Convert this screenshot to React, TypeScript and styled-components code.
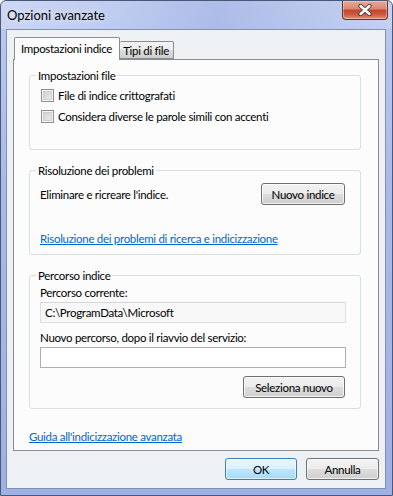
import React from 'react';
import { createGlobalStyle, styled } from 'styled-components';

const GlobalStyle = createGlobalStyle`
  html, body {
    margin: 0;
    padding: 0;
    background: #ffffff;
  }
  body {
    font-family: Lato, 'Noto Sans', sans-serif;
    font-size: 11.5px;
    letter-spacing: -0.3px;
    color: #000000;
  }
  * {
    box-sizing: border-box;
  }
`;

const Window = styled.div`
  width: 393px;
  height: 496px;
  display: flex;
  flex-direction: column;
  border: 1px solid #4a5878;
  border-radius: 6px 6px 0 0;
  background: linear-gradient(180deg, #bccaf0 0%, #a9b9e8 40%, #9fb0e4 100%);
  overflow: hidden;
`;

const TitleBar = styled.div`
  height: 28px;
  display: flex;
  align-items: flex-start;
  justify-content: space-between;
  padding-left: 6px;
  background: linear-gradient(
    90deg,
    rgba(255, 255, 255, 0.25) 0%,
    rgba(255, 255, 255, 0.05) 30%,
    rgba(120, 135, 200, 0.2) 55%,
    rgba(255, 255, 255, 0.15) 100%
  );
`;

const Title = styled.span`
  margin-top: 7px;
  font-size: 13px;
  letter-spacing: 0;
  line-height: 15px;
  color: #000000;
  text-shadow: 0 0 6px rgba(255, 255, 255, 0.9);
`;

const CloseButton = styled.div`
  width: 46px;
  height: 19px;
  margin-right: 4px;
  display: flex;
  align-items: center;
  justify-content: center;
  border: 1px solid #6f3227;
  border-top: none;
  border-radius: 0 0 4px 4px;
  background: linear-gradient(
    180deg,
    #e9a99a 0%,
    #d98672 45%,
    #c2442a 50%,
    #cd5a3f 75%,
    #e0907a 100%
  );
  box-shadow: inset 0 0 0 1px rgba(255, 220, 210, 0.45);
`;

const Client = styled.div`
  flex: 1;
  margin: 0 6px 6px 5px;
  display: flex;
  flex-direction: column;
  padding: 7px 6px 8px 6px;
  border: 1px solid #8090b6;
  background: #eef1f4;
`;

const TabStrip = styled.div`
  display: flex;
  align-items: flex-end;
  height: 23px;
  margin-bottom: -1px;
  position: relative;
  z-index: 1;
`;

const Tab = styled.div<{ $active?: boolean }>`
  height: ${(p) => (p.$active ? '23px' : '18px')};
  display: flex;
  align-items: ${(p) => (p.$active ? 'flex-start' : 'center')};
  padding: ${(p) => (p.$active ? '3px 7px 0 6px' : '0 4px 0 3px')};
  margin-left: ${(p) => (p.$active ? '1px' : '0')};
  margin-bottom: ${(p) => (p.$active ? '0' : '1px')};
  border: 1px solid #898c95;
  border-bottom: ${(p) => (p.$active ? 'none' : '1px solid #898c95')};
  border-left: ${(p) => (p.$active ? '1px solid #898c95' : 'none')};
  border-radius: 2px 2px 0 0;
  background: ${(p) =>
    p.$active
      ? '#fcfcfc'
      : 'linear-gradient(180deg, #f2f2f2 0%, #ebebeb 50%, #dddddd 51%, #cfcfcf 100%)'};
  line-height: 15px;
  white-space: nowrap;
`;

const Panel = styled.div`
  flex: 1;
  display: flex;
  flex-direction: column;
  padding: 8px 17px 0 15px;
  border: 1px solid #898c95;
  background: #fcfcfc;
`;

const Group = styled.fieldset<{ $gap?: number }>`
  margin: 0 0 ${(p) => p.$gap ?? 0}px 0;
  padding: 0;
  min-inline-size: 0;
  border: 1px solid #d5dfe5;
  border-radius: 3px;
`;

const Legend = styled.legend`
  margin-left: 6px;
  padding: 0 2px;
  line-height: 15px;
  color: #000000;
`;

const GroupBody = styled.div<{ $pad: string; $gap?: number }>`
  display: flex;
  flex-direction: column;
  gap: ${(p) => p.$gap ?? 0}px;
  padding: ${(p) => p.$pad};
`;

const CheckRow = styled.label`
  display: flex;
  align-items: center;
  gap: 4px;
  height: 17px;
  line-height: 15px;
`;

const CheckBox = styled.span`
  width: 13px;
  height: 13px;
  flex: none;
  border: 1px solid #8e8f8f;
  background: #f4f4f4;
  box-shadow: inset 0 0 0 1px #f4f4f4, inset 0 0 0 2px #cfcfcf;
  background-image: linear-gradient(135deg, #cbcbcb 0%, #f0f0f0 100%);
`;

const SplitRow = styled.div`
  display: flex;
  align-items: center;
  justify-content: space-between;
`;

const Text = styled.span<{ $top?: number }>`
  margin-top: ${(p) => p.$top ?? 0}px;
  line-height: 15px;
  white-space: nowrap;
`;

const Link = styled.a`
  line-height: 15px;
  color: #0066cc;
  text-decoration: underline;
  white-space: nowrap;
  cursor: pointer;
`;

const Button = styled.button<{ $width: number; $default?: boolean }>`
  width: ${(p) => p.$width}px;
  height: 22px;
  padding: 0;
  font: inherit;
  letter-spacing: inherit;
  line-height: 15px;
  color: #000000;
  border: 1px solid ${(p) => (p.$default ? '#3c7fb1' : '#707070')};
  border-radius: 3px;
  background: ${(p) =>
    p.$default
      ? 'linear-gradient(180deg, #eaf6fd 0%, #d9f0fc 50%, #bee6fd 51%, #a7d9f5 100%)'
      : 'linear-gradient(180deg, #f2f2f2 0%, #ebebeb 50%, #dddddd 51%, #cfcfcf 100%)'};
  box-shadow: inset 0 0 0 1px
    ${(p) => (p.$default ? 'rgba(255,255,255,0.6)' : 'rgba(255,255,255,0.7)')};
`;

const ButtonRow = styled.div<{ $pad?: string }>`
  display: flex;
  justify-content: flex-end;
  gap: 9px;
  padding: ${(p) => p.$pad ?? '0'};
`;

const Input = styled.div<{ $disabled?: boolean }>`
  height: 21px;
  margin-top: 2px;
  display: flex;
  align-items: center;
  padding: 0 4px;
  line-height: 15px;
  border: 1px solid ${(p) => (p.$disabled ? '#dcdfe3' : '#abadb3')};
  border-top-color: ${(p) => (p.$disabled ? '#d4d7db' : '#abadb3')};
  background: ${(p) => (p.$disabled ? '#f8f8f8' : '#ffffff')};
`;

const FooterLink = styled.div`
  margin-top: 20px;
`;

const Footer = styled.div`
  margin-top: 7px;
`;

const CloseGlyph = () => (
  <svg width="16" height="12" viewBox="0 0 16 12">
    <path
      d="M3.5 2 L12.5 10 M12.5 2 L3.5 10"
      stroke="#3b3b3b"
      strokeWidth="4.2"
      strokeLinecap="round"
      fill="none"
    />
    <path
      d="M3.5 2 L12.5 10 M12.5 2 L3.5 10"
      stroke="#ffffff"
      strokeWidth="2.4"
      strokeLinecap="round"
      fill="none"
    />
  </svg>
);

export default function App() {
  return (
    <>
      <GlobalStyle />
      <Window>
        <TitleBar>
          <Title>Opzioni avanzate</Title>
          <CloseButton>
            <CloseGlyph />
          </CloseButton>
        </TitleBar>
        <Client>
          <TabStrip>
            <Tab $active>Impostazioni indice</Tab>
            <Tab>Tipi di file</Tab>
          </TabStrip>
          <Panel>
            <Group $gap={13}>
              <Legend>Impostazioni file</Legend>
              <GroupBody $pad="4px 0 24px 11px" $gap={4}>
                <CheckRow>
                  <CheckBox />
                  File di indice crittografati
                </CheckRow>
                <CheckRow>
                  <CheckBox />
                  Considera diverse le parole simili con accenti
                </CheckRow>
              </GroupBody>
            </Group>

            <Group $gap={13}>
              <Legend>Risoluzione dei problemi</Legend>
              <GroupBody $pad="5px 15px 8px 10px" $gap={26}>
                <SplitRow>
                  <Text>Eliminare e ricreare l'indice.</Text>
                  <Button $width={84}>Nuovo indice</Button>
                </SplitRow>
                <div>
                  <Link>Risoluzione dei problemi di ricerca e indicizzazione</Link>
                </div>
              </GroupBody>
            </Group>

            <Group>
              <Legend>Percorso indice</Legend>
              <GroupBody $pad="2px 14px 10px 10px">
                <Text>Percorso corrente:</Text>
                <Input $disabled>C:\ProgramData\Microsoft</Input>
                <Text $top={7}>Nuovo percorso, dopo il riavvio del servizio:</Text>
                <Input />
                <ButtonRow $pad="8px 1px 0 0">
                  <Button $width={102}>Seleziona nuovo</Button>
                </ButtonRow>
              </GroupBody>
            </Group>

            <FooterLink>
              <Link>Guida all'indicizzazione avanzata</Link>
            </FooterLink>
          </Panel>
          <Footer>
            <ButtonRow>
              <Button $width={72} $default>
                OK
              </Button>
              <Button $width={73}>Annulla</Button>
            </ButtonRow>
          </Footer>
        </Client>
      </Window>
    </>
  );
}
